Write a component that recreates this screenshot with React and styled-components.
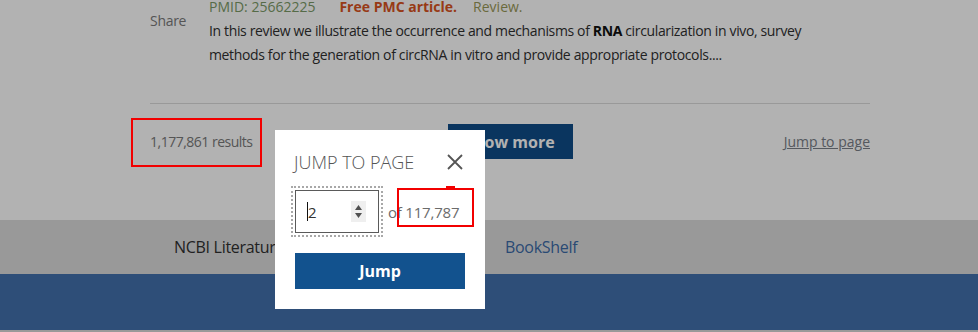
import React from "react";
import styled, { createGlobalStyle } from "styled-components";

const FONT = `"Open Sans", "Noto Sans", "Liberation Sans", sans-serif`;

const Global = createGlobalStyle`
  html, body { margin: 0; padding: 0; background: #ffffff; overflow: hidden; }
  body { font-family: ${FONT}; width: 978px; height: 332px; }
  * { box-sizing: border-box; }
`;

const Page = styled.div`
  position: relative;
  width: 978px;
  height: 332px;
  overflow: hidden;
  display: flex;
  flex-direction: column;
`;

const Main = styled.main`
  height: 220px;
  padding: 0 108px 0 150px;
  display: flex;
  flex-direction: column;
`;

const Article = styled.article`
  margin-top: -5px;
  display: grid;
  grid-template-columns: 59px 1fr;
`;

const ShareLink = styled.div`
  padding-top: 14px;
  font-size: 14px;
  line-height: 24px;
  letter-spacing: -0.3px;
  color: #7a7a7a;
`;

const Body = styled.div`
  font-size: 14px;
  line-height: 24px;
  color: #303030;
`;

const Meta = styled.div`
  display: flex;
  align-items: center;
`;

const MetaItem = styled.span`
  color: ${(p) => p.$color};
  font-weight: ${(p) => (p.$bold ? 700 : 400)};
  margin-right: ${(p) => p.$gap}px;
`;

const Snippet = styled.p`
  margin: 0;
  letter-spacing: -0.36px;
  b { font-weight: 700; color: #111; }
`;

const Divider = styled.hr`
  margin: 36px 0 0;
  border: 0;
  height: 1px;
  background: #dcdcdc;
`;

const ResultsRow = styled.div`
  margin-top: 20px;
  display: grid;
  grid-template-columns: 1fr auto 1fr;
  align-items: center;
`;

const Count = styled.span`
  font-size: 14px;
  letter-spacing: -0.5px;
  color: #7a7a7a;
`;

const ShowMore = styled.button`
  width: 125px;
  height: 35px;
  border: 0;
  background: #0f4d89;
  color: #ffffff;
  font-family: ${FONT};
  font-size: 16px;
  font-weight: 700;
`;

const JumpLink = styled.a`
  justify-self: end;
  font-size: 14px;
  color: #7a8088;
  text-decoration: underline;
`;

const FooterNav = styled.nav`
  height: 54px;
  background: #dcdcdc;
  display: flex;
  align-items: center;
  padding-left: 174px;
  font-size: 16px;
  letter-spacing: -0.3px;
`;

const NavItem = styled.span`
  color: ${(p) => (p.$link ? "#3c6aa7" : "#303030")};
  width: ${(p) => (p.$w ? `${p.$w}px` : "auto")};
`;

const Band = styled.div`
  height: 56px;
  background: #4270ad;
`;

const Strip = styled.div`
  flex: 1;
  background: #dcdcdc;
`;

const Overlay = styled.div`
  position: absolute;
  inset: 0;
  background: rgba(0, 0, 0, 0.3);
`;

const Dialog = styled.div`
  position: absolute;
  left: 275px;
  top: 130px;
  width: 210px;
  background: #ffffff;
  padding: 20px;
  display: flex;
  flex-direction: column;
`;

const DialogHead = styled.div`
  height: 24px;
  display: flex;
  align-items: center;
  justify-content: space-between;
`;

const Title = styled.h2`
  margin: 0 0 0 -1px;
  font-size: 18px;
  font-weight: 300;
  color: #555;
`;

const Close = styled.button`
  border: 0;
  background: none;
  padding: 0;
  margin-right: 2px;
  width: 16px;
  height: 16px;
  display: flex;
`;

const InputRow = styled.div`
  margin-top: 16px;
  display: flex;
  align-items: center;
`;

const NumberBox = styled.div`
  width: 84px;
  height: 43px;
  border: 1px solid #5a5a5a;
  outline: 2px dotted #a8a8a8;
  outline-offset: 2px;
  display: flex;
  align-items: center;
  padding: 0 12px 0 11px;
  font-size: 15px;
  color: #333;
`;

const Caret = styled.span`
  display: inline-block;
  width: 1px;
  height: 19px;
  background: #111;
`;

const Spinner = styled.div`
  margin-left: auto;
  width: 15px;
  height: 21px;
  background: #efefef;
  display: flex;
  flex-direction: column;
  align-items: center;
  justify-content: center;
  gap: 3px;
`;

const OfText = styled.span`
  margin-left: 9px;
  font-size: 15px;
  letter-spacing: -0.2px;
  color: #6b6b6b;
`;

const JumpButton = styled.button`
  margin-top: 20px;
  height: 36px;
  border: 0;
  background: #12528e;
  color: #ffffff;
  font-family: ${FONT};
  font-size: 16px;
  font-weight: 700;
`;

const Marker = styled.div`
  position: absolute;
  left: ${(p) => p.$x}px;
  top: ${(p) => p.$y}px;
  width: ${(p) => p.$w}px;
  height: ${(p) => p.$h}px;
  border: ${(p) => (p.$fill ? "0" : "2px solid #f20000")};
  background: ${(p) => (p.$fill ? "#f20000" : "transparent")};
`;

const Tri = ({ up }) => (
  <svg width="7" height="5" viewBox="0 0 7 5">
    <path d={up ? "M3.5 0 L7 5 L0 5 Z" : "M0 0 L7 0 L3.5 5 Z"} fill="#505050" />
  </svg>
);

export default function App() {
  return (
    <>
      <Global />
      <Page>
        <Main>
          <Article>
            <ShareLink>Share</ShareLink>
            <Body>
              <Meta>
                <MetaItem $color="#7b9a67" $gap={24}>PMID: 25662225</MetaItem>
                <MetaItem $color="#d9531f" $bold $gap={16}>Free PMC article.</MetaItem>
                <MetaItem $color="#999858" $gap={0}>Review.</MetaItem>
              </Meta>
              <Snippet>
                In this review we illustrate the occurrence and mechanisms of <b>RNA</b> circularization in vivo, survey
                <br />
                methods for the generation of circRNA in vitro and provide appropriate protocols....
              </Snippet>
            </Body>
          </Article>
          <Divider />
          <ResultsRow>
            <Count>1,177,861 results</Count>
            <ShowMore>Show more</ShowMore>
            <JumpLink>Jump to page</JumpLink>
          </ResultsRow>
        </Main>
        <FooterNav>
          <NavItem $w={331}>NCBI Literature Resources</NavItem>
          <NavItem $link>BookShelf</NavItem>
        </FooterNav>
        <Band />
        <Strip />
        <Overlay />
        <Dialog>
          <DialogHead>
            <Title>JUMP TO PAGE</Title>
            <Close aria-label="Close">
              <svg width="16" height="16" viewBox="0 0 16 16">
                <path d="M1 1 L15 15 M15 1 L1 15" stroke="#555" strokeWidth="1.8" fill="none" />
              </svg>
            </Close>
          </DialogHead>
          <InputRow>
            <NumberBox>
              <Caret />
              2
              <Spinner>
                <Tri up />
                <Tri />
              </Spinner>
            </NumberBox>
            <OfText>of 117,787</OfText>
          </InputRow>
          <JumpButton>Jump</JumpButton>
        </Dialog>
        <Marker $x={131} $y={118} $w={131} $h={49} />
        <Marker $x={397} $y={188} $w={77} $h={39} />
        <Marker $x={446} $y={186} $w={9} $h={2} $fill />
      </Page>
    </>
  );
}
